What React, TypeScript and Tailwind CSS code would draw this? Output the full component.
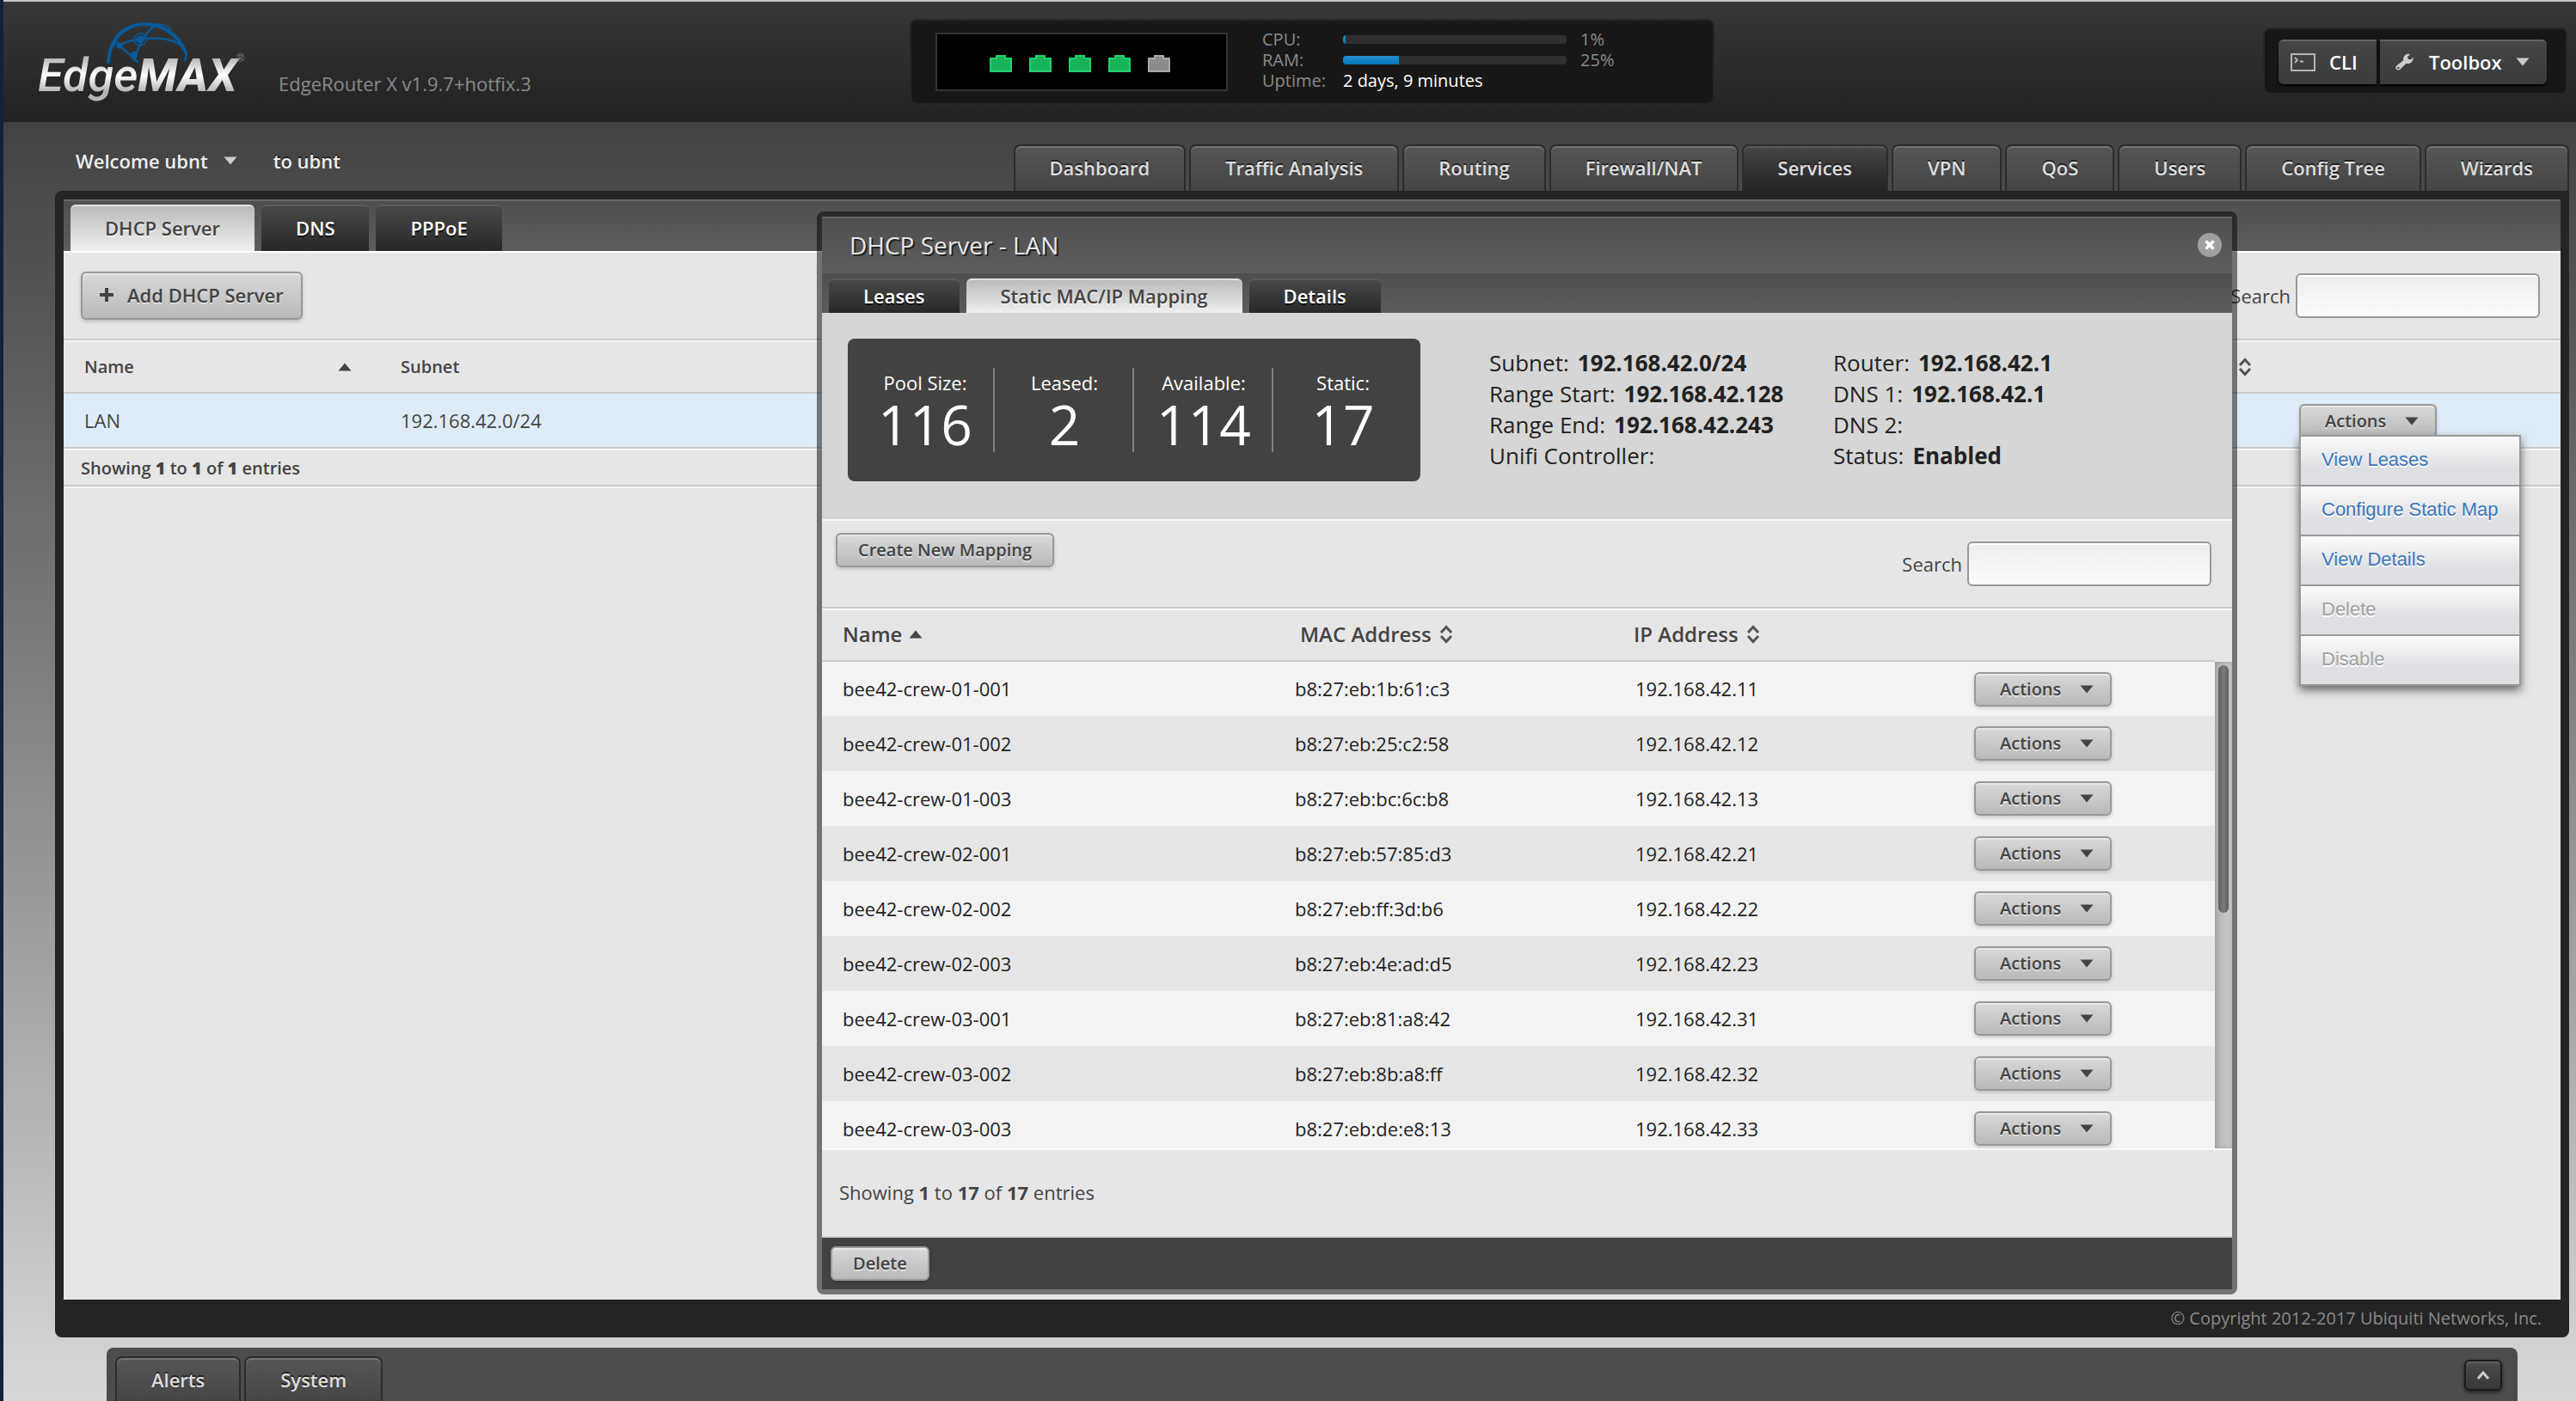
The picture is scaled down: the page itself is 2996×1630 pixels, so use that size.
import type { ReactNode } from "react";

const mappings = [
  ["bee42-crew-01-001", "b8:27:eb:1b:61:c3", "192.168.42.11"],
  ["bee42-crew-01-002", "b8:27:eb:25:c2:58", "192.168.42.12"],
  ["bee42-crew-01-003", "b8:27:eb:bc:6c:b8", "192.168.42.13"],
  ["bee42-crew-02-001", "b8:27:eb:57:85:d3", "192.168.42.21"],
  ["bee42-crew-02-002", "b8:27:eb:ff:3d:b6", "192.168.42.22"],
  ["bee42-crew-02-003", "b8:27:eb:4e:ad:d5", "192.168.42.23"],
  ["bee42-crew-03-001", "b8:27:eb:81:a8:42", "192.168.42.31"],
  ["bee42-crew-03-002", "b8:27:eb:8b:a8:ff", "192.168.42.32"],
  ["bee42-crew-03-003", "b8:27:eb:de:e8:13", "192.168.42.33"],
];

const navItems = [
  "Dashboard",
  "Traffic Analysis",
  "Routing",
  "Firewall/NAT",
  "Services",
  "VPN",
  "QoS",
  "Users",
  "Config Tree",
  "Wizards",
];

const stats = [
  ["Pool Size:", "116"],
  ["Leased:", "2"],
  ["Available:", "114"],
  ["Static:", "17"],
];

const menuItems = [
  { label: "View Leases", disabled: false },
  { label: "Configure Static Map", disabled: false },
  { label: "View Details", disabled: false },
  { label: "Delete", disabled: true },
  { label: "Disable", disabled: true },
];

function Triangle({ up = false, className }: { up?: boolean; className: string }) {
  return (
    <svg viewBox="0 0 16 10" className={`h-[10px] w-4 shrink-0 ${className}`} aria-hidden="true">
      <path d={up ? "M8 0.5 15.5 9.5H0.5Z" : "M0.5 0.5H15.5L8 9.5Z"} fill="currentColor" />
    </svg>
  );
}

function SortBoth() {
  return (
    <svg viewBox="0 0 16 22" className="h-[22px] w-4 shrink-0 text-[#555]" aria-hidden="true">
      <path d="M2 9 8 2.5 14 9M2 13 8 19.5 14 13" fill="none" stroke="currentColor" strokeWidth="3" />
    </svg>
  );
}

function LightButton({ className = "", children }: { className?: string; children: ReactNode }) {
  return (
    <button
      type="button"
      className={`flex items-center rounded-md border-2 border-[#999] bg-linear-to-b from-[#d8d8d8] to-[#bababa] font-semibold text-[#444] shadow-[inset_0_2px_0_#e6e6e6,0_2px_4px_rgba(0,0,0,0.18)] [text-shadow:0_2px_0_#dedede] ${className}`}
    >
      {children}
    </button>
  );
}

function ActionsButton() {
  return (
    <LightButton className="h-10 w-40 justify-between pr-[19px] pl-7 text-[20px]">
      Actions
      <Triangle className="text-[#444]" />
    </LightButton>
  );
}

function SubTab({ label, active = false, className }: { label: string; active?: boolean; className: string }) {
  return (
    <button
      type="button"
      className={`rounded-t-md border-t-2 px-10 pb-[2px] text-[22px] font-semibold ${
        active
          ? "border-[#e0e0e0] bg-linear-to-b from-[#bbb] to-[#f0f0f0] text-[#444] [text-shadow:0_2px_0_#eee]"
          : "border-[#5c5c5c] bg-linear-to-b from-[#484848] to-[#282828] text-white [text-shadow:0_2px_0_#111]"
      } ${className}`}
    >
      {label}
    </button>
  );
}

function SearchBox({ id, width }: { id: string; width: string }) {
  return (
    <div className="flex items-center gap-[6px] text-[22px] text-[#444]">
      <label htmlFor={id}>Search</label>
      <input
        id={id}
        type="text"
        className={`h-[52px] rounded-md border-2 border-[#999] bg-linear-to-b from-[#ededed] to-[#fcfcfc] px-3 shadow-[inset_0_2px_0_#fff] ${width}`}
      />
    </div>
  );
}

function Port({ up }: { up: boolean }) {
  return (
    <svg viewBox="0 0 26 20" className="h-5 w-[26px]" aria-hidden="true">
      <path d="M1 4H8V1H18V4H25V19H1Z" fill={up ? "#17b45a" : "#8c8c8c"} stroke={up ? "#25d06c" : "#a8a8a8"} strokeWidth="2" />
    </svg>
  );
}

function Meter({ label, value }: { label: string; value: number }) {
  return (
    <>
      <span>{label}</span>
      <span className="flex items-center gap-4">
        <span className="h-[10px] w-[260px] overflow-hidden rounded-[4px] bg-[#303030]">
          <span className="block h-full bg-linear-to-b from-[#2291cf] to-[#0077b8]" style={{ width: `${value}%` }} />
        </span>
        {value}%
      </span>
    </>
  );
}

function Logo() {
  return (
    <svg viewBox="0 0 246 98" className="h-[98px] w-[246px] shrink-0" role="img" aria-label="EdgeMAX">
      <defs>
        <linearGradient id="silver" x1="0" y1="0" x2="0" y2="1">
          <stop offset="0.2" stopColor="#b9babc" />
          <stop offset="0.5" stopColor="#ffffff" />
          <stop offset="0.8" stopColor="#b4b5b8" />
        </linearGradient>
      </defs>
      <g fill="none" stroke="#075a9a" strokeLinecap="round">
        <path d="M82 46C83 20 100 3 124 2 146 2 164 16 170 32" strokeWidth="4" />
        <path d="M96 10C91 15 89 20 89 28M98 9C108 3 128 0 146 3 152 4 154 6 154 9" strokeWidth="1.5" />
        <path d="M94 27C110 18 140 16 158 22 170 27 176 34 171 44" strokeWidth="2.5" />
        <path d="M137 3C124 12 117 28 112 44M90 22 116 46M160 18C166 22 170 28 172 36" strokeWidth="2.5" />
        <circle cx="119" cy="20" r="7" strokeWidth="1.5" />
      </g>
      <g fill="#075a9a">
        <circle cx="119" cy="20" r="4.5" />
        <circle cx="95" cy="27" r="3.5" />
        <circle cx="112" cy="38" r="4" />
      </g>
      <text x="0" y="80" fontFamily="Roboto, sans-serif" fontSize="54" fontStyle="italic" fill="url(#silver)">
        <tspan fontWeight="500">Edge</tspan>
        <tspan fontWeight="800">MAX</tspan>
      </text>
      <text x="231" y="46" fontFamily="'Liberation Sans', sans-serif" fontSize="12" fill="#8a8a8a">®</text>
    </svg>
  );
}

function Header() {
  return (
    <header className="flex h-[142px] justify-between border-t-2 border-[#c4c8ca] bg-linear-to-b from-[#383838] to-[#212121] pr-[10px] pl-10">
      <div className="flex flex-1 gap-[34px] pt-6">
        <Logo />
        <p className="pt-[55px] text-[22px] leading-8 text-[#8a8a8a]">EdgeRouter X v1.9.7+hotfix.3</p>
      </div>
      <section className="mt-5 ml-[22px] flex h-[100px] w-[936px] gap-10 rounded-lg border-2 border-[#262626] bg-[#171717] px-7 py-[10px]">
        <div className="mt-1 flex h-[68px] w-[340px] items-center justify-center gap-5 border-2 border-[#333] bg-black pt-1 pr-1">
          {[true, true, true, true, false].map((up, i) => (
            <Port key={i} up={up} />
          ))}
        </div>
        <div className="grid grid-cols-[94px_auto] content-start text-[20px] leading-6 text-[#8a8a8a]">
          <Meter label="CPU:" value={1} />
          <Meter label="RAM:" value={25} />
          <span>Uptime:</span>
          <span className="text-white">2 days, 9 minutes</span>
        </div>
      </section>
      <div className="flex flex-1 justify-end">
        <div className="mt-[30px] flex h-[78px] gap-1 rounded-lg border-2 border-[#262626] bg-[#171717] py-3 pr-[22px] pl-4 text-[22px] font-semibold text-white [text-shadow:0_-2px_0_#222]">
          <button type="button" className="flex h-[52px] w-[114px] items-center gap-4 rounded-l-md border-t-2 border-[#606262] bg-linear-to-b from-[#454545] to-[#393b3d] pb-[2px] pl-[14px] shadow-[0_2px_3px_#000]">
            <svg viewBox="0 0 29 21" className="h-[21px] w-[29px]" fill="none" stroke="#b5b5b5" aria-hidden="true">
              <path d="M1 1H28V20H1Z" strokeWidth="2" />
              <path d="M5 5 8 8 5 11M11 9.500H15" strokeWidth="1.8" />
            </svg>
            CLI
          </button>
          <button type="button" className="flex h-[52px] w-[194px] items-center rounded-r-md border-t-2 border-[#606262] bg-linear-to-b from-[#454545] to-[#393b3d] pb-[2px] pl-[18px] shadow-[0_2px_3px_#000]">
            <svg viewBox="0 0 21 20" className="mr-[18px] h-5 w-[21px]" aria-hidden="true">
              <path d="M1.200 14.600 9.200 8.200C8.800 5 10.200 2 13 1 14.500 .4 16 .6 17 1.300L13.800 4.200 15 7 18.200 7.200 20.600 4.600C21 7.600 19.600 10.600 16.800 11.700 15.200 12.200 13.800 12.200 12.600 11.700L5.400 18.800C4.200 20 2.200 19.800 1.100 18.600 0 17.400 0 15.600 1.200 14.600ZM3.300 15.700A1.200 1.200 0 1 0 3.300 18.100 1.200 1.200 0 1 0 3.300 15.700Z" fill="#ccc" fillRule="evenodd" />
            </svg>
            Toolbox
            <Triangle className="ml-4 text-[#ccc]" />
          </button>
        </div>
      </div>
    </header>
  );
}

function NavBar() {
  return (
    <div className="flex h-20 justify-between pr-2 pl-[84px]">
      <div className="flex h-[90px] items-center text-[22px] font-semibold text-[#eee] [text-shadow:0_-2px_0_#222]">
        <button type="button" className="flex items-center gap-[18px]">
          Welcome ubnt
          <Triangle className="text-[#ccc]" />
        </button>
        <span className="ml-[42px]">to ubnt</span>
      </div>
      <nav className="flex gap-1 pt-[26px]">
        {navItems.map((item) => (
          <a
            key={item}
            href={`#${item}`}
            className={`flex h-[54px] items-center rounded-t-lg border-2 border-b-0 border-[#2c2c2c] px-10 pb-[2px] text-[22px] font-semibold text-[#ddd] [text-shadow:0_-2px_0_#222] ${
              item === "Services"
                ? "bg-linear-to-b from-[#464646] to-[#242424] shadow-[inset_0_2px_0_#5a5a5a]"
                : "bg-linear-to-b from-[#575757] to-[#444] shadow-[inset_0_2px_0_#757575]"
            }`}
          >
            {item}
          </a>
        ))}
      </nav>
    </div>
  );
}

function ActionsMenu() {
  return (
    <ul className="absolute top-[48px] left-[25px] z-30 w-[258px] border-2 border-b-0 border-[#999] font-['Liberation_Sans',sans-serif] text-[22px] shadow-[0_5px_10px_rgba(0,0,0,0.55)]">
      {menuItems.map(({ label, disabled }) => (
        <li key={label} className="border-b-2 border-[#999]">
          <button
            type="button"
            disabled={disabled}
            className={`block h-14 w-full bg-linear-to-b from-[#fbfbfb] to-[#dfe0e3] to-65% px-6 pb-1 text-left [text-shadow:0_2px_0_#fff] ${
              disabled ? "text-[#a2a2a2]" : "text-[#3a78bb]"
            }`}
          >
            {label}
          </button>
        </li>
      ))}
    </ul>
  );
}

function ServerList() {
  return (
    <>
      <div className="flex h-[60px] items-end gap-2 border-t-2 border-[#666] bg-linear-to-b from-[#4f4f4f] to-[#5e5e5e] pl-2">
        <SubTab label="DHCP Server" active className="h-[54px]" />
        <SubTab label="DNS" className="h-[54px]" />
        <SubTab label="PPPoE" className="h-[54px]" />
      </div>
      <div className="flex h-[104px] items-center justify-between border-t-2 border-b-2 border-t-white border-b-[#ccc] pr-6 pl-5">
        <LightButton className="h-14 gap-4 px-5 pb-[2px] text-[22px]">
          <svg viewBox="0 0 16 16" className="h-4 w-4" aria-hidden="true">
            <path d="M8 0V16M0 8H16" stroke="#444" strokeWidth="4" />
          </svg>
          Add DHCP Server
        </LightButton>
        <SearchBox id="server-search" width="w-[284px]" />
      </div>
      <table className="w-full table-fixed border-t-2 border-[#f5f5f5] text-left text-[#444]">
        <colgroup>
          <col className="w-[367px]" />
          <col className="w-[700px]" />
          <col />
          <col className="w-[329px]" />
        </colgroup>
        <thead>
          <tr className="h-[60px] border-b-2 border-[#ccc] text-[20px]">
            <th className="pr-8 pl-6 font-semibold">
              <button type="button" className="flex w-full items-center justify-between">
                Name
                <Triangle up className="text-[#444]" />
              </button>
            </th>
            <th className="pl-[25px] font-semibold">Subnet</th>
            <th className="pr-[30px]">
              <button type="button" className="ml-auto block" aria-label="Sort">
                <SortBoth />
              </button>
            </th>
            <th />
          </tr>
        </thead>
        <tbody>
          <tr className="h-16 border-b-2 border-[#ccc] bg-[#deecf8] text-[22px]">
            <td className="pl-6">LAN</td>
            <td className="pl-[25px]">192.168.42.0/24</td>
            <td />
            <td className="relative pl-[25px] align-top">
              <div className="pt-3">
                <ActionsButton />
              </div>
              <ActionsMenu />
            </td>
          </tr>
        </tbody>
      </table>
      <p className="h-11 border-t-2 border-b-2 border-t-[#fafafa] border-b-[#ccc] pl-5 text-[20px] leading-[42px] font-semibold text-[#444] shadow-[0_2px_0_#f5f5f5]">
        Showing <b>1</b> to <b>1</b> of <b>1</b> entries
      </p>
    </>
  );
}

function Detail({ label, value }: { label: string; value?: string }) {
  return (
    <div className="flex gap-[10px]">
      <dt>{label}</dt>
      <dd className="font-bold">{value}</dd>
    </div>
  );
}

function Dialog() {
  return (
    <section
      role="dialog"
      aria-label="DHCP Server - LAN"
      className="absolute top-[14px] left-[876px] z-20 w-[1652px] rounded-lg border-[6px] border-black/50 bg-[#e6e6e6] bg-clip-padding text-[#444]"
    >
      <div className="flex h-[66px] items-center justify-between border-t-2 border-[#666] bg-linear-to-b from-[#4f4f4f] to-[#5e5e5e] pr-3 pb-[2px] pl-8">
        <h2 className="text-[28px] text-[#e6e6e6] [text-shadow:2px_2px_0_#222]">DHCP Server - LAN</h2>
        <button type="button" aria-label="Close">
          <svg viewBox="0 0 28 28" className="h-7 w-7" aria-hidden="true">
            <circle cx="14" cy="14" r="14" fill="#a0a0a0" />
            <path d="M9.500 9.500 18.500 18.500M18.500 9.500 9.500 18.500" stroke="#fff" strokeWidth="3.500" />
          </svg>
        </button>
      </div>
      <div className="flex h-[46px] items-end gap-2 bg-linear-to-b from-[#4f4f4f] to-[#5c5c5c] pl-2">
        <SubTab label="Leases" className="h-10" />
        <SubTab label="Static MAC/IP Mapping" active className="h-10" />
        <SubTab label="Details" className="h-10" />
      </div>
      <div className="flex h-[242px] items-start border-b-2 border-[#f8f8f8] bg-[#d6d6d6] pt-[30px] pl-[30px] text-[#222]">
        <dl className="flex h-[166px] items-start rounded-lg bg-[#424242] px-[9px] pt-[34px] text-center text-white">
          {stats.map(([label, value]) => (
            <div key={label} className="h-[98px] w-[162px] border-r-2 border-[#808080] pt-[2px] pl-[2px] last:border-transparent">
              <dt className="text-[22px] leading-[30px]">{label}</dt>
              <dd className="text-[64px] leading-[68px]">{value}</dd>
            </div>
          ))}
        </dl>
        <dl className="ml-20 w-[400px] pt-[10px] text-[26px] leading-9">
          <Detail label="Subnet:" value="192.168.42.0/24" />
          <Detail label="Range Start:" value="192.168.42.128" />
          <Detail label="Range End:" value="192.168.42.243" />
          <Detail label="Unifi Controller:" />
        </dl>
        <dl className="pt-[10px] text-[26px] leading-9">
          <Detail label="Router:" value="192.168.42.1" />
          <Detail label="DNS 1:" value="192.168.42.1" />
          <Detail label="DNS 2:" />
          <Detail label="Status:" value="Enabled" />
        </dl>
      </div>
      <div className="flex h-[102px] items-center justify-between border-b-2 border-[#ccc] pr-6 pl-4">
        <LightButton className="mb-8 h-10 px-6 text-[20px]">Create New Mapping</LightButton>
        <SearchBox id="mapping-search" width="w-[284px]" />
      </div>
      <div className="flex h-[630px] border-t-2 border-b-2 border-[#f8f8f8]">
        <div className="flex-1 overflow-hidden">
          <table className="w-full table-fixed text-left">
            <colgroup>
              <col className="w-[526px]" />
              <col className="w-[396px]" />
              <col className="w-[394px]" />
              <col />
            </colgroup>
            <thead>
              <tr className="h-[59px] border-b-2 border-[#ccc] text-[24px]">
                <th className="pb-[2px] pl-6 font-semibold">
                  <button type="button" className="flex items-center gap-2">
                    Name
                    <Triangle up className="text-[#444]" />
                  </button>
                </th>
                <th className="pb-[2px] pl-[30px] font-semibold">
                  <button type="button" className="flex items-center gap-[9px]">
                    MAC Address
                    <SortBoth />
                  </button>
                </th>
                <th className="pb-[2px] pl-[22px] font-semibold">
                  <button type="button" className="flex items-center gap-[9px]">
                    IP Address
                    <SortBoth />
                  </button>
                </th>
                <th />
              </tr>
            </thead>
            <tbody className="text-[22px] text-[#222]">
              {mappings.map(([name, mac, ip]) => (
                <tr key={name} className="h-16 odd:bg-[#f3f3f3]">
                  <td className="pl-6">{name}</td>
                  <td className="pl-6">{mac}</td>
                  <td className="pl-6">{ip}</td>
                  <td className="pl-6">
                    <ActionsButton />
                  </td>
                </tr>
              ))}
            </tbody>
          </table>
        </div>
        <div className="mt-[60px] w-5 bg-linear-to-r from-[#b4b4b4] to-[#cecece] px-1 pt-1 shadow-[inset_0_0_6px_rgba(0,0,0,0.2)]">
          <div className="h-72 w-3 rounded-full bg-linear-to-r from-[#606060] via-[#7a7a7a] to-[#606060]" />
        </div>
      </div>
      <p className="h-[102px] border-b-2 border-[#ccc] pt-[33px] pl-5 text-[22px] leading-8">
        Showing <b>1</b> to <b>17</b> of <b>17</b> entries
      </p>
      <div className="flex h-[60px] items-center bg-[#424242] pl-[10px]">
        <LightButton className="h-10 px-6 text-[20px]">Delete</LightButton>
      </div>
    </section>
  );
}

function BottomBar() {
  return (
    <div className="mr-[68px] ml-[120px] flex h-[62px] justify-between rounded-t-lg bg-[#4c4c4c] pr-[18px] pl-[10px]">
      <div className="flex gap-1 pt-[10px]">
        {["Alerts", "System"].map((label) => (
          <button
            key={label}
            type="button"
            className="h-[52px] rounded-t-lg border-2 border-b-0 border-[#2c2c2c] bg-linear-to-b from-[#575757] to-[#454545] px-10 text-[22px] font-semibold text-[#ddd] shadow-[inset_0_2px_0_#757575] [text-shadow:0_-2px_0_#222]"
          >
            {label}
          </button>
        ))}
      </div>
      <button
        type="button"
        aria-label="Expand"
        className="mt-[14px] flex h-9 w-11 items-center justify-center rounded-md border-2 border-[#1c1c1c] bg-linear-to-b from-[#4a4a4a] to-[#38393b] shadow-[inset_0_2px_0_#606262,0_2px_4px_#222]"
      >
        <svg viewBox="0 0 16 10" className="h-[10px] w-4" aria-hidden="true">
          <path d="M2 9 8 2 14 9" fill="none" stroke="#ccc" strokeWidth="3" />
        </svg>
      </button>
    </div>
  );
}

export default function App() {
  return (
    <div className="flex min-h-screen flex-col border-l-4 border-[#14213a] bg-linear-to-b from-[#363636] to-[#d8d8d8] font-['Open_Sans',sans-serif] whitespace-nowrap">
      <Header />
      <NavBar />
      <main className="relative mr-2 mb-3 ml-[60px] flex flex-1 flex-col rounded-lg rounded-tr-none bg-[#242424] px-[10px] pt-[10px]">
        <div className="relative flex-1 bg-[#e6e6e6]">
          <ServerList />
          <Dialog />
        </div>
        <footer className="h-11 pr-[22px] text-right text-[20px] leading-[44px] text-[#8a8a8a]">
          © Copyright 2012-2017 Ubiquiti Networks, Inc.
        </footer>
      </main>
      <BottomBar />
    </div>
  );
}
